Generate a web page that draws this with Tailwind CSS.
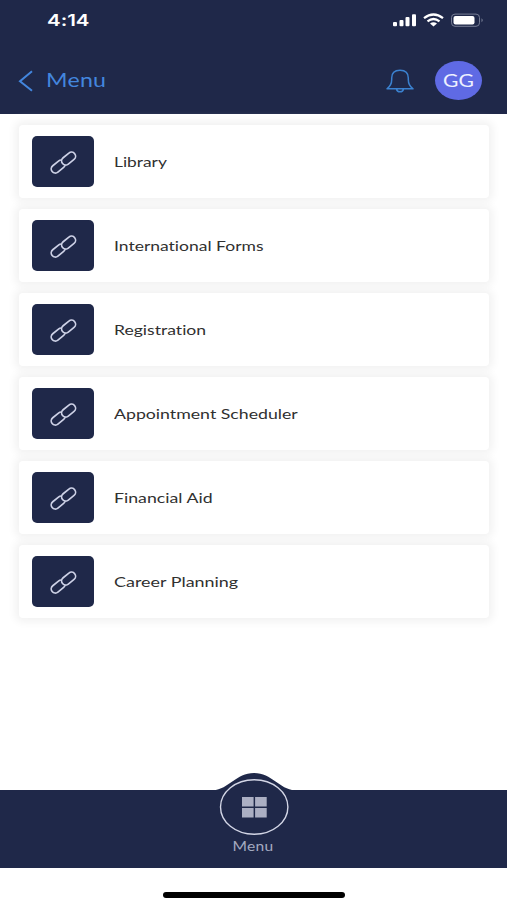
<!DOCTYPE html>
<html lang="en">
<head>
<meta charset="utf-8">
<title>Menu</title>
<script src="https://cdn.jsdelivr.net/npm/@tailwindcss/browser@4"></script>
</head>
<body class="bg-white">
<svg class="hidden"><symbol id="link" viewBox="0 0 28 24"><g fill="none" stroke="#cdd1e6" stroke-width="1.7"><rect x="-7.8" y="-4.1" width="15.6" height="8.2" rx="4.1" transform="translate(9.2 16.6) rotate(-39)"/><rect x="-7.8" y="-4.1" width="15.6" height="8.2" rx="4.1" transform="translate(19.6 8.6) rotate(-39)" fill="#1f2849"/></g></symbol></svg>
<div class="flex h-[900px] w-[507px] flex-col overflow-hidden bg-white font-['Lato',sans-serif] [font-variant-ligatures:none]">
  <header class="h-[114px] shrink-0 bg-[#1f2849]">
    <div class="flex h-10 items-center justify-between pl-[47px] pr-[23px]">
      <span class="inline-block origin-left scale-x-[1.28] font-['Inter',sans-serif] text-base font-semibold leading-10 text-white">4:14</span>
      <svg class="h-4 w-[92px]" viewBox="0 0 92 16" fill="#fff">
        <rect x="1" y="10" width="4" height="4.3" rx="1"/><rect x="7.5" y="8" width="4" height="6.3" rx="1"/><rect x="13.5" y="5" width="4" height="9.3" rx="1"/><rect x="20" y="2.3" width="4" height="12" rx="1"/>
        <g fill="none" stroke="#fff" stroke-width="2.3"><path d="M32 6.1Q41.5-1 51 6.1M35.5 9.3Q41.5 4.8 47.5 9.3"/></g><path d="M38 11.4Q41.5 9 45 11.4L41.5 14.4Z"/>
        <rect x="59.5" y="2.1" width="28" height="12.2" rx="3.5" fill="none" stroke="#777e96"/><rect x="61.5" y="4" width="21" height="8.6" rx="2"/><path d="M89.5 6.3Q92 8.2 89.5 10.2Z" fill="#777e96"/>
      </svg>
    </div>
    <div class="flex h-[81px] items-center pl-[18px] pr-[25px]">
      <svg class="h-[22px] w-4" viewBox="0 0 16 22" fill="none" stroke="#4386de" stroke-width="2"><path d="M14 1.2 2 11.2 14 20.8"/></svg>
      <span class="-mt-px ml-[12px] inline-block origin-left scale-x-[1.22] text-[19px] tracking-[0.2px] text-[#4386de]">Menu</span>
      <svg class="ml-auto h-6 w-7" viewBox="0 0 28 24" fill="none" stroke="#3b82d0" stroke-width="1.5" stroke-linejoin="round"><path d="M1 19.8Q5.7 16.5 5.7 10.5V9Q5.7 1.2 14 1.2T22.3 9V10.5Q22.3 16.5 27 19.8ZM10.5 20Q11 22.8 14 22.8T17.5 20"/></svg>
      <div class="ml-[21px] flex h-[39px] w-[47px] items-center justify-center rounded-[50%] bg-[#5f6ae4]"><span class="inline-block scale-x-[1.24] text-[17px] text-[#edf0ff]">GG</span></div>
    </div>
  </header>
  <main class="flex flex-1 flex-col gap-[11px] pl-[19px] pr-[18px] pt-[11px] text-[14px] text-[#303030]">
    <div class="flex h-[73px] shrink-0 items-center rounded-[4px] bg-white pl-[13px] shadow-[0_0_9px_4px_#f2f2f2]"><div class="flex h-[51px] w-[62px] items-center justify-center rounded-[5px] bg-[#1f2849]"><svg class="h-6 w-7"><use href="#link"/></svg></div><span class="ml-5 inline-block origin-left scale-x-[1.24]">Library</span></div>
    <div class="flex h-[73px] shrink-0 items-center rounded-[4px] bg-white pl-[13px] shadow-[0_0_9px_4px_#f2f2f2]"><div class="flex h-[51px] w-[62px] items-center justify-center rounded-[5px] bg-[#1f2849]"><svg class="h-6 w-7"><use href="#link"/></svg></div><span class="ml-5 inline-block origin-left scale-x-[1.25]">International Forms</span></div>
    <div class="flex h-[73px] shrink-0 items-center rounded-[4px] bg-white pl-[13px] shadow-[0_0_9px_4px_#f2f2f2]"><div class="flex h-[51px] w-[62px] items-center justify-center rounded-[5px] bg-[#1f2849]"><svg class="h-6 w-7"><use href="#link"/></svg></div><span class="ml-5 inline-block origin-left scale-x-[1.255]">Registration</span></div>
    <div class="flex h-[73px] shrink-0 items-center rounded-[4px] bg-white pl-[13px] shadow-[0_0_9px_4px_#f2f2f2]"><div class="flex h-[51px] w-[62px] items-center justify-center rounded-[5px] bg-[#1f2849]"><svg class="h-6 w-7"><use href="#link"/></svg></div><span class="ml-5 inline-block origin-left scale-x-[1.265]">Appointment Scheduler</span></div>
    <div class="flex h-[73px] shrink-0 items-center rounded-[4px] bg-white pl-[13px] shadow-[0_0_9px_4px_#f2f2f2]"><div class="flex h-[51px] w-[62px] items-center justify-center rounded-[5px] bg-[#1f2849]"><svg class="h-6 w-7"><use href="#link"/></svg></div><span class="ml-5 inline-block origin-left scale-x-[1.265]">Financial Aid</span></div>
    <div class="flex h-[73px] shrink-0 items-center rounded-[4px] bg-white pl-[13px] shadow-[0_0_9px_4px_#f2f2f2]"><div class="flex h-[51px] w-[62px] items-center justify-center rounded-[5px] bg-[#1f2849]"><svg class="h-6 w-7"><use href="#link"/></svg></div><span class="ml-5 inline-block origin-left scale-x-[1.28]">Career Planning</span></div>
  </main>
  <nav class="flex h-[78px] shrink-0 flex-col items-center bg-[#1f2849]">
    <svg class="-mt-[18px] h-[64px] w-[90px] shrink-0" viewBox="0 0 90 64"><path d="M4 18.5C20 17 27 1 45 1S70 17 86 18.5Z" fill="#1f2849"/><ellipse cx="45.2" cy="35" rx="33.7" ry="27.3" fill="#1f2849" stroke="#d3d6e6" stroke-width="1.4"/><g fill="#abafc3"><path d="M33 25h11.6v9.6H33zM46.1 25h11.6v9.6H46.1zM33 36h11.6v9.6H33zM46.1 36h11.6v9.6H46.1z"/></g></svg>
    <span class="inline-block scale-x-[1.2] text-[13px] leading-5 tracking-[0.2px] text-[#a5aac0]">Menu</span>
  </nav>
  <footer class="flex h-8 shrink-0 justify-center pt-6"><div class="h-[6px] w-[182px] rounded-full bg-black"></div></footer>
</div>
</body>
</html>
